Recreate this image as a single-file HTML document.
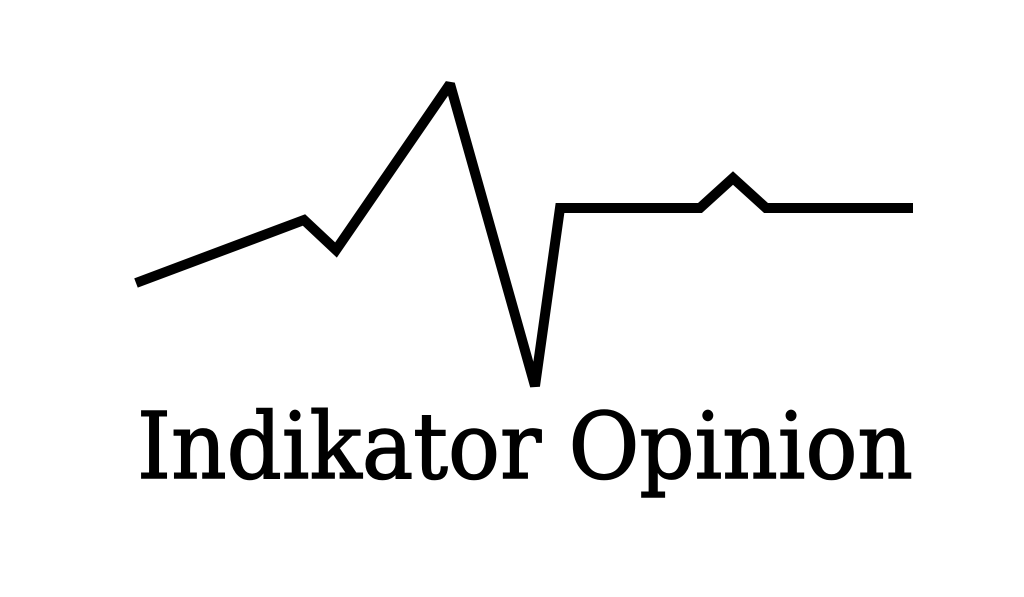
<!DOCTYPE html>
<html><head><meta charset="utf-8"><style>
html,body{margin:0;padding:0;background:#fff;width:1024px;height:597px;overflow:hidden}
svg{display:block}
</style></head><body>
<svg width="1024" height="597" viewBox="0 0 1024 597" xmlns="http://www.w3.org/2000/svg">
<rect width="1024" height="597" fill="#fff"/>
<polyline points="136,283 304,220 336,250 450,84 535,386 560,208 700,208 733,178 766,208 913,208" fill="none" stroke="#000" stroke-width="10" stroke-linejoin="miter" stroke-miterlimit="2"/>
<text x="137" y="478" font-family="'DejaVu Serif','Liberation Serif',serif" font-size="92" textLength="776" lengthAdjust="spacingAndGlyphs" fill="#000" stroke="#000" stroke-width="1.5">Indikator Opinion</text>
</svg>
</body></html>
